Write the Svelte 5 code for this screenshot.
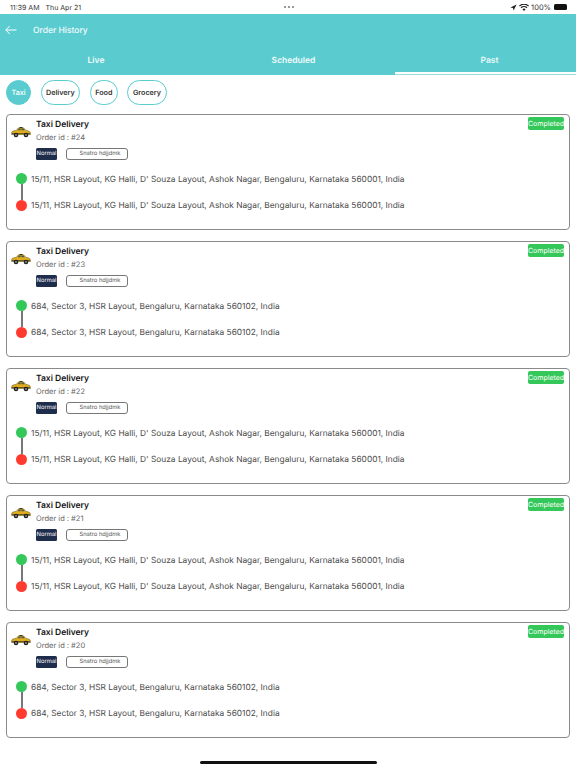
<script>
  const addrA = '15/11, HSR Layout, KG Halli, D\' Souza Layout, Ashok Nagar, Bengaluru, Karnataka 560001, India';
  const addrB = '684, Sector 3, HSR Layout, Bengaluru, Karnataka 560102, India';
  const orders = [
    { id: 24, addr: addrA },
    { id: 23, addr: addrB },
    { id: 22, addr: addrA },
    { id: 21, addr: addrA },
    { id: 20, addr: addrB }
  ];
  const chips = ['Taxi', 'Delivery', 'Food', 'Grocery'];
</script>

<div class="page">
  <div class="status">
    <div class="st-left"><span>11:39 AM</span><span>Thu Apr 21</span></div>
    <div class="dots"><i></i><i></i><i></i></div>
    <div class="st-right">
      <svg width="7" height="7" viewBox="0 0 7 7"><path d="M6.6.4 3.6 6.6 3 4 .4 3.4z" fill="#222"/></svg>
      <svg width="10" height="7" viewBox="0 0 10 7"><path d="M5 7 3.4 5.2a2.3 2.3 0 0 1 3.2 0zM2.5 4.3 1.6 3.3a4.9 4.9 0 0 1 6.8 0l-.9 1a3.6 3.6 0 0 0-5 0zM.8 2.5 0 1.6a7.300 7.300 0 0 1 10 0l-.8.9a6 6 0 0 0-8.400 0z" fill="#222"/></svg>
      <span>100%</span>
      <div class="batt"></div>
    </div>
  </div>

  <header class="head">
    <div class="title-row">
      <svg width="12" height="10" viewBox="0 0 12 10" fill="none" stroke="#fff" stroke-width="1"><path d="M11.500 5H.8M4.800 1 .8 5l4 4"/></svg>
      <span class="title">Order History</span>
    </div>
    <div class="tabs">
      <div class="tab">Live</div>
      <div class="tab">Scheduled</div>
      <div class="tab active">Past</div>
    </div>
  </header>

  <div class="chips">
    {#each chips as c, i}
      <div class="chip" class:on={i === 0}>{c}</div>
    {/each}
  </div>

  <div class="list">
    {#each orders as o}
      <div class="card">
        <span class="badge">Completed</span>
        <div class="top">
          <svg class="car" width="20" height="11" viewBox="0 0 20 11">
            <path d="M5.500 3.200 7.300.9h5.400l2 2.300 3.300 1c1 .4 1.500 1.200 1.500 3.300H.5C.5 5 1 4.300 2.200 4z" fill="#e0ad1e" stroke="#5a4a16" stroke-width=".5"/>
            <path d="M6.800 3.200 7.900 1.500h1.700v1.700zM10.400 1.500h2l1.300 1.700h-3.300z" fill="#4b5a4e"/>
            <rect x="8.500" y="0" width="3" height="1" fill="#3c3410"/>
            <rect x="1" y="6" width="18" height="1.200" fill="#6a5a1c"/>
            <circle cx="5" cy="8" r="2.300" fill="#222"/><circle cx="15" cy="8" r="2.300" fill="#222"/>
            <circle cx="5" cy="8" r=".9" fill="#999"/><circle cx="15" cy="8" r=".9" fill="#999"/>
          </svg>
          <div class="info">
            <div class="name">Taxi Delivery</div>
            <div class="oid">Order id : #{o.id}</div>
            <div class="tags">
              <span class="normal">Normal</span>
              <span class="snatro">Snatro hdjjdmk</span>
            </div>
          </div>
        </div>
        <div class="route">
          <div class="stop green">{o.addr}</div>
          <div class="stop red">{o.addr}</div>
        </div>
      </div>
    {/each}
  </div>

  <div class="home"></div>
</div>

<style>
  :global(body) { margin: 0; background: #fff; }
  .page {
    position: relative;
    width: 576px;
    height: 768px;
    overflow: hidden;
    font-family: Inter, "Liberation Sans", sans-serif;
    text-rendering: geometricPrecision;
    color: #222;
  }
  .status {
    height: 14px;
    display: grid;
    grid-template-columns: 1fr auto 1fr;
    align-items: center;
    padding: 0 9px 0 10px;
    font-size: 7px;
    color: #333;
  }
  .st-left { display: flex; gap: 6px; }
  .dots { display: flex; gap: 2px; }
  .dots i { width: 2px; height: 2px; border-radius: 50%; background: #777; }
  .st-right { display: flex; justify-content: flex-end; align-items: center; gap: 2px; font-size: 7.500px; }
  .batt { width: 13px; height: 6px; border-radius: 1.500px; background: #111; margin-left: 1px; }

  .head { background: #5accd0; height: 61px; color: #fff; display: flex; flex-direction: column; }
  .title-row { display: flex; align-items: center; height: 32px; padding-left: 5px; gap: 16px; }
  .title { font-size: 8.500px; font-weight: 500; opacity: .92; padding-top: 2px; }
  .tabs { display: grid; grid-template-columns: 192px 203px 181px; height: 29px; box-sizing: border-box; }
  .tab {
    display: flex; justify-content: center; align-items: center;
    font-size: 8.500px; font-weight: 600; opacity: .92;
    height: 28px; box-sizing: border-box; padding-top: 3px;
    border-bottom: 2px solid transparent;
  }
  .tab.active { border-bottom-color: #fff; opacity: 1; padding-left: 8px; color: #e8f8f8; box-shadow: 0 1px 0 #9adde0; }

  .chips { display: flex; gap: 9.500px; padding: 5px 6px 0; height: 25px; }
  .chip {
    height: 25px; box-sizing: border-box; padding: 0 4.500px;
    border: 1px solid #5accd0; border-radius: 13px;
    display: flex; align-items: center; justify-content: center;
    font-size: 7.200px; font-weight: 600; color: #333;
  }
  .chip.on { background: #5accd0; color: #fff; width: 25px; font-weight: 500; padding: 0; }

  .list { display: flex; flex-direction: column; gap: 11px; padding: 9px 6px 0; }
  .card {
    position: relative; height: 116px; box-sizing: border-box;
    border: 1px solid #8a8a8a; border-radius: 4px; padding: 4px 0 0 4px;
  }
  .badge {
    position: absolute; top: 2px; right: 5px;
    width: 36px; height: 13px; border-radius: 2px;
    background: #34c759; color: #fff; font-size: 7px; line-height: 13px; text-align: center;
    white-space: nowrap;
  }
  .top { display: flex; gap: 5px; }
  .car { margin-top: 8px; flex: none; }
  .info { display: flex; flex-direction: column; }
  .name { font-size: 8.500px; font-weight: 600; color: #111; line-height: 12px; }
  .oid { font-size: 7.500px; color: #666; line-height: 12px; margin-top: 1px; }
  .tags { display: flex; gap: 9px; margin-top: 4px; }
  .normal {
    width: 21px; height: 12px; border-radius: 1.500px; background: #1f2d4d; color: #fff;
    font-size: 5.800px; line-height: 12px; text-align: center;
  }
  .snatro {
    width: 62px; height: 12px; box-sizing: border-box; border: 1px solid #777; border-radius: 3px;
    color: #555; font-size: 5.800px; line-height: 10px; text-align: center; padding-left: 6px;
  }
  .route { margin-top: 14px; padding-left: 20px; display: flex; flex-direction: column; gap: 13px; margin-left: -4px; }
  .stop {
    position: relative; font-size: 8.350px; line-height: 13px; color: #4a4a4a; white-space: nowrap;
    padding-left: 4px;
  }
  .stop::before {
    content: ""; position: absolute; left: -11px; top: -1px; width: 11px; height: 11px; border-radius: 50%;
  }
  .green::before { background: #34c759; }
  .red::before { background: #ff3b30; top: 0; }
  .green::after {
    content: ""; position: absolute; left: -6px; top: 10px; width: 1.500px; height: 16px; background: #777;
  }

  .home {
    position: absolute; left: 200px; bottom: 4px; width: 177px; height: 3px; border-radius: 2px; background: #111;
  }
</style>
